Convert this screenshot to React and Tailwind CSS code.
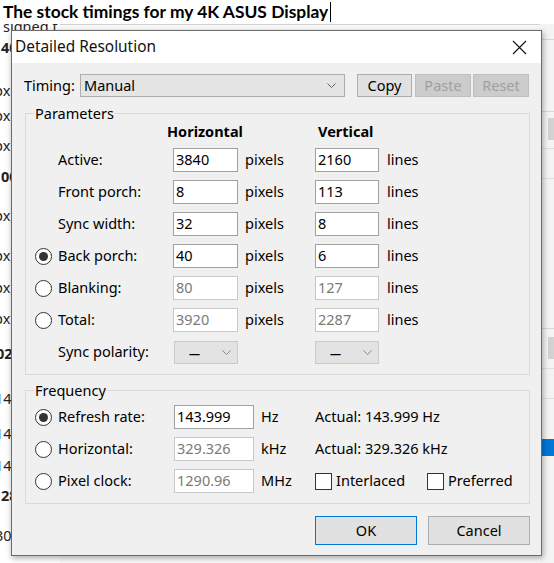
import React from 'react'

const params = [
  { label: 'Active:', h: '3840', v: '2160' },
  { label: 'Front porch:', h: '8', v: '113' },
  { label: 'Sync width:', h: '32', v: '8' },
  { label: 'Back porch:', h: '40', v: '6', radio: true, checked: true },
  { label: 'Blanking:', h: '80', v: '127', radio: true, disabled: true },
  { label: 'Total:', h: '3920', v: '2287', radio: true, disabled: true },
]

const freq = [
  { label: 'Refresh rate:', value: '143.999', unit: 'Hz', checked: true, actual: 'Actual: 143.999 Hz' },
  { label: 'Horizontal:', value: '329.326', unit: 'kHz', disabled: true, actual: 'Actual: 329.326 kHz' },
  { label: 'Pixel clock:', value: '1290.96', unit: 'MHz', disabled: true },
]

const Chevron = ({ color = '#606060' }) => (
  <svg width="9" height="5" viewBox="0 0 9 5" fill="none">
    <polyline points="0.5,0.5 4.5,4.5 8.5,0.5" stroke={color} strokeWidth="1" />
  </svg>
)

const Radio = ({ checked }) => (
  <span className="flex h-[17px] w-[17px] items-center justify-center rounded-full border border-[#333333] bg-white">
    {checked && <span className="h-[9px] w-[9px] rounded-full bg-[#333333]" />}
  </span>
)

const Checkbox = () => <span className="h-[17px] w-[17px] border border-[#333333] bg-white" />

const Box = ({ children, disabled, className }) => (
  <div
    className={`flex h-[24px] items-center border bg-white pl-[2px] ${
      disabled ? 'border-[#c8c8c8] text-[#7a7a7a]' : 'border-[#a0a0a0] text-black'
    } ${className}`}
  >
    {children}
  </div>
)

const Polarity = ({ className }) => (
  <div className={`flex h-[23px] items-center border border-[#cacaca] bg-[#e3e3e3] ${className}`}>
    <span className="ml-[14px] text-[11px] font-black leading-none">—</span>
    <span className="ml-auto mr-[6px] flex">
      <Chevron color="#8a8a8a" />
    </span>
  </div>
)

const Group = ({ title, className, children }) => (
  <div className={`relative ml-[13px] w-[505px] border border-[#d9d9d9] ${className}`}>
    <span className="absolute -top-[10px] left-[8px] bg-[#f0f0f0] px-px leading-[18px]">{title}</span>
    {children}
  </div>
)

const Button = ({ children, disabled, className }) => (
  <div
    className={`flex items-center justify-center border ${
      disabled ? 'border-[#bfbfbf] bg-[#cccccc] text-[#a0a0a0]' : 'border-[#adadad] bg-[#e1e1e1] text-black'
    } ${className}`}
  >
    {children}
  </div>
)

// window behind the dialog: only its edges show
const LeftColumn = () => (
  <div className="flex w-[60px] flex-col text-[#222222]">
    <div className="-mt-[7px] h-[19px] pl-[3px] leading-[19px]">signed t</div>
    <div className="mt-[2px] h-[19px] pl-[1px] font-bold leading-[19px]">4096</div>
    <div className="-ml-[6px] mt-[24px] h-[19px] leading-[19px]">px</div>
    <div className="-ml-[6px] mt-[6px] h-[19px] leading-[19px]">px</div>
    <div className="-ml-[6px] mt-[11px] h-[19px] leading-[19px]">px</div>
    <div className="mt-[12px] h-[19px] pl-[1px] font-bold leading-[19px]">00</div>
    <div className="-ml-[6px] mt-[20px] h-[19px] leading-[19px]">px</div>
    <div className="-ml-[6px] mt-[21px] h-[19px] leading-[19px]">px</div>
    <div className="-ml-[6px] mt-[13px] h-[19px] leading-[19px]">px</div>
    <div className="-ml-[6px] mt-[12px] h-[19px] leading-[19px]">px</div>
    <div className="-ml-[4px] mt-[16px] h-[19px] font-bold leading-[19px]">02</div>
    <div className="-ml-[5px] mt-[26px] h-[19px] leading-[19px]">14</div>
    <div className="-ml-[5px] mt-[16px] h-[19px] leading-[19px]">14</div>
    <div className="-ml-[5px] mt-[13px] h-[19px] leading-[19px]">14</div>
    <div className="mt-[11px] h-[19px] pl-[1px] font-bold leading-[19px]">28</div>
    <div className="-ml-[5px] mt-[21px] h-[19px] leading-[19px]">30</div>
  </div>
)

const RightColumn = () => (
  <div className="flex w-[14px] flex-col bg-[#f4f4f4]">
    <div className="h-[16px] border-b border-[#d6d6d6]" />
    <div className="h-[72px] border-b border-[#d6d6d6]" />
    <div className="flex h-[37px] justify-end border-b border-[#e0e0e0] pt-[6px]">
      <span className="h-[22px] w-[6px] bg-[#d2d2d2]" />
    </div>
    <div className="h-[30px] border-b border-[#e0e0e0]" />
    <div className="h-[150px] border-b border-[#d6d6d6]" />
    <div className="flex h-[40px] justify-end border-b border-[#e0e0e0] pt-[8px]">
      <span className="h-[22px] w-[6px] bg-[#d2d2d2]" />
    </div>
    <div className="h-[30px] border-b border-[#e0e0e0]" />
    <div className="h-[40px]" />
    <div className="h-[17px] bg-[#0078d7]" />
    <div className="flex-1" />
  </div>
)

const Dialog = () => (
  <div className="absolute left-[11px] top-[6px] flex h-[526px] w-[531px] flex-col border border-[#6b6b6b] bg-[#f0f0f0] shadow-[1px_2px_6px_rgba(0,0,0,0.35)]">
    <div className="flex h-[32px] items-center bg-white pl-[3px] pr-[14px]">
      <span className="text-[15.4px] text-[#111111]">Detailed Resolution</span>
      <svg className="ml-auto" width="15" height="15" viewBox="0 0 15 15">
        <path d="M1 1 L14 14 M14 1 L1 14" stroke="#111111" strokeWidth="1.1" />
      </svg>
    </div>

    <div className="mt-[11px] flex h-[23px] items-center pl-[12px]">
      <span className="w-[56px]">Timing:</span>
      <div className="flex h-[23px] w-[265px] items-center border border-[#adadad] bg-[#e5e5e5] pl-[3px] pr-[8px]">
        <span>Manual</span>
        <span className="ml-auto flex">
          <Chevron />
        </span>
      </div>
      <Button className="ml-[12px] h-[23px] w-[55px]">Copy</Button>
      <Button disabled className="ml-[3px] h-[23px] w-[56px]">Paste</Button>
      <Button disabled className="ml-[2px] h-[23px] w-[56px]">Reset</Button>
    </div>

    <Group title="Parameters" className="mt-[16px] pb-[10px] pl-[9px] pt-[8px]">
      <div className="flex h-[20px] items-center font-bold">
        <span className="w-[132px]" />
        <span className="w-[151px]">Horizontal</span>
        <span>Vertical</span>
      </div>
      <div className="mt-[6px] flex flex-col gap-[8px]">
        {params.map((p) => (
          <div key={p.label} className="flex h-[24px] items-center">
            <span className="flex w-[23px]">{p.radio && <Radio checked={p.checked} />}</span>
            <span className="w-[115px]">{p.label}</span>
            <Box className="w-[65px]" disabled={p.disabled}>{p.h}</Box>
            <span className="w-[77px] pl-[7px]">pixels</span>
            <Box className="w-[64px]" disabled={p.disabled}>{p.v}</Box>
            <span className="pl-[8px]">lines</span>
          </div>
        ))}
        <div className="flex h-[24px] items-center">
          <span className="w-[23px]" />
          <span className="w-[115px]">Sync polarity:</span>
          <Polarity className="ml-px w-[64px]" />
          <span className="w-[77px]" />
          <Polarity className="w-[64px]" />
        </div>
      </div>
    </Group>

    <Group title="Frequency" className="mt-[15px] pb-[10px] pl-[9px] pt-[14px]">
      <div className="flex flex-col gap-[8px]">
        {freq.map((f) => (
          <div key={f.label} className="flex h-[24px] items-center">
            <span className="flex w-[23px]">
              <Radio checked={f.checked} />
            </span>
            <span className="w-[116px]">{f.label}</span>
            <Box className="w-[80px]" disabled={f.disabled}>{f.value}</Box>
            <span className="w-[61px] pl-[7px]">{f.unit}</span>
            {f.actual ? (
              <span>{f.actual}</span>
            ) : (
              <div className="flex items-center">
                <span className="flex w-[112px] items-center gap-[4px]">
                  <Checkbox />
                  Interlaced
                </span>
                <span className="flex items-center gap-[4px]">
                  <Checkbox />
                  Preferred
                </span>
              </div>
            )}
          </div>
        ))}
      </div>
    </Group>

    <div className="mt-[12px] flex justify-end gap-[11px] pr-[11px]">
      <div className="flex h-[29px] w-[102px] items-center justify-center border border-[#0078d7] bg-[#e1e1e1]">OK</div>
      <Button className="h-[29px] w-[102px]">Cancel</Button>
    </div>
  </div>
)

export default function App() {
  return (
    <div className="h-[563px] w-[554px] overflow-hidden bg-white font-['Noto_Sans',sans-serif] text-[14.5px] text-black">
      <div className="flex h-[24px] items-center pl-[3px]">
        <span className="font-['Lato',sans-serif] text-[17.4px] font-bold leading-[24px]">
          The stock timings for my 4K ASUS Display
        </span>
        <span className="ml-[2px] h-[20px] w-px bg-black" />
      </div>

      <div className="relative h-[539px] overflow-hidden">
        <div className="flex h-full">
          <LeftColumn />
          <div className="flex-1 border-t border-[#d0d0d0] bg-[#fafafa]" />
          <RightColumn />
        </div>
        <Dialog />
      </div>
    </div>
  )
}
